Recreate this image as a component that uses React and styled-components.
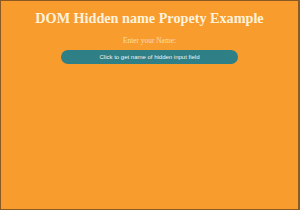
import React from "react";
import styled, { createGlobalStyle } from "styled-components";

const Global = createGlobalStyle`
  html, body { margin: 0; padding: 0; background: #f89c2e; }
  * { box-sizing: border-box; }
`;

const Page = styled.div`
  width: 300px;
  height: 210px;
  background: #f89c2e;
  border: 1px solid #8a5a22;
  border-right-width: 2px;
  display: flex;
  flex-direction: column;
  align-items: center;
  padding-top: 9px;
`;

const Title = styled.h1`
  margin: 0;
  font-family: "Liberation Serif", "Times New Roman", serif;
  font-weight: bold;
  font-size: 14.2px;
  line-height: 17px;
  color: #fff3dc;
`;

const Label = styled.div`
  margin-top: 9px;
  font-family: "Liberation Serif", "Times New Roman", serif;
  font-size: 7.4px;
  line-height: 9px;
  color: #f8dcae;
`;

const Button = styled.button`
  margin-top: 5px;
  width: 177px;
  height: 14px;
  border: none;
  border-radius: 7px;
  background: #2e7f86;
  color: #f2f5f5;
  font-family: "Liberation Sans", Arial, sans-serif;
  font-size: 6px;
  padding: 0;
  display: flex;
  align-items: center;
  justify-content: center;
`;

export default function App() {
  return (
    <>
      <Global />
      <Page>
        <Title>DOM Hidden name Propety Example</Title>
        <Label>Enter your Name:</Label>
        <input type="hidden" name="hidden" />
        <Button>Click to get name of hidden input field</Button>
      </Page>
    </>
  );
}
